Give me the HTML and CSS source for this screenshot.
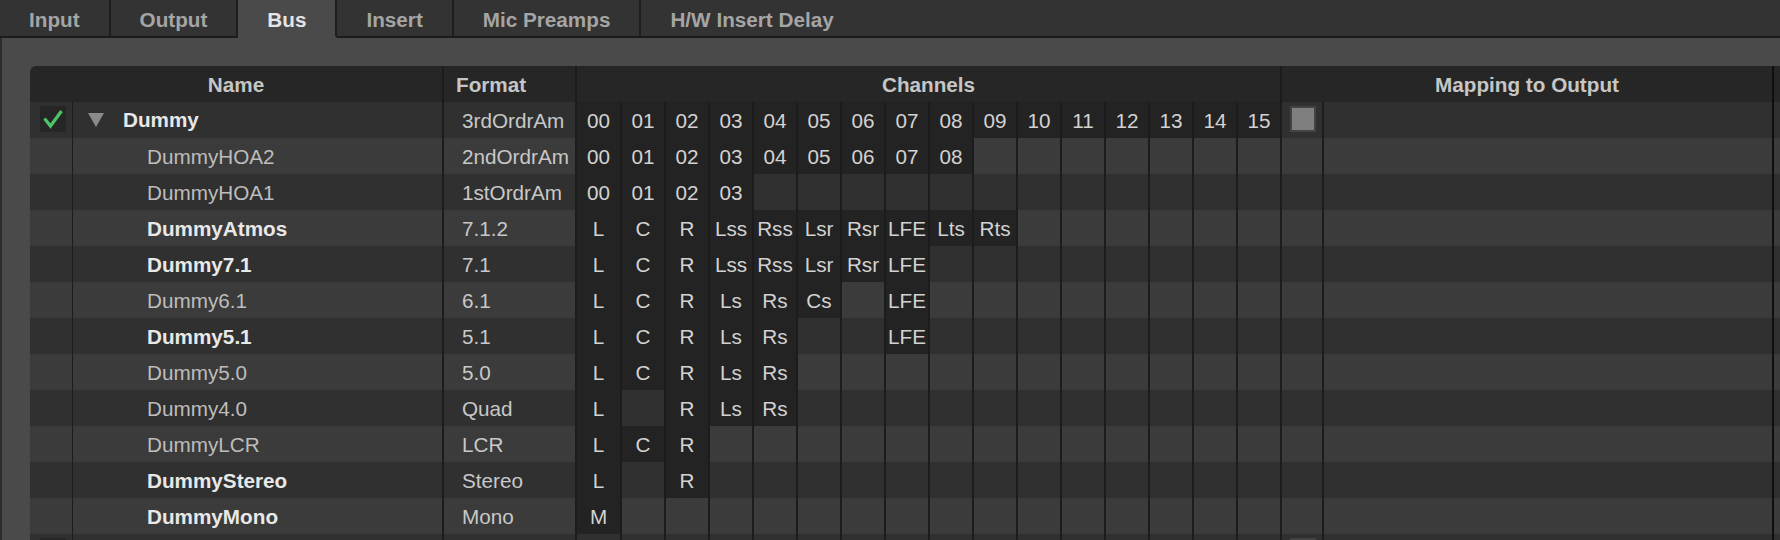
FILE: index.html
```html
<!DOCTYPE html>
<html>
<head>
<meta charset="utf-8">
<link rel="stylesheet" href="styles.css">
</head>
<body>
<div class="tabs">
  <div class="tab">Input</div>
  <div class="tab">Output</div>
  <div class="tab active">Bus</div>
  <div class="tab">Insert</div>
  <div class="tab">Mic Preamps</div>
  <div class="tab last">H/W Insert Delay</div>
  <div class="tabs-fill"></div>
</div>
<div class="panel">
  <div class="table">
    <div class="row head">
      <div class="h-name">Name</div>
      <div class="h-format">Format</div>
      <div class="h-channels">Channels</div>
      <div class="h-map">Mapping to Output</div>
      <div class="extra"></div>
    </div>

    <div class="row dark">
      <div class="c-check"><div class="chk"><svg width="26" height="26" viewBox="0 0 26 26"><path d="M4.5 12.5 L10.5 20 L21.5 5" fill="none" stroke="#4cc466" stroke-width="3.2" stroke-linejoin="miter"/></svg></div></div>
      <div class="c-name group"><svg class="tri" width="16" height="14" viewBox="0 0 16 14"><path d="M0 0 H16 L8 14 Z" fill="#8a8a8a"/></svg><span class="b">Dummy</span></div>
      <div class="c-format">3rdOrdrAm</div>
      <div class="ch first on">00</div><div class="ch on">01</div><div class="ch on">02</div><div class="ch on">03</div><div class="ch on">04</div><div class="ch on">05</div><div class="ch on">06</div><div class="ch on">07</div><div class="ch on">08</div><div class="ch on">09</div><div class="ch on">10</div><div class="ch on">11</div><div class="ch on">12</div><div class="ch on">13</div><div class="ch on">14</div><div class="ch on">15</div>
      <div class="c-mapchk"><div class="mbox"></div></div>
      <div class="c-map"></div>
      <div class="extra"></div>
    </div>

    <div class="row light">
      <div class="c-check"></div>
      <div class="c-name"><span class="r">DummyHOA2</span></div>
      <div class="c-format">2ndOrdrAm</div>
      <div class="ch first on">00</div><div class="ch on">01</div><div class="ch on">02</div><div class="ch on">03</div><div class="ch on">04</div><div class="ch on">05</div><div class="ch on">06</div><div class="ch on">07</div><div class="ch on">08</div><div class="ch"></div><div class="ch"></div><div class="ch"></div><div class="ch"></div><div class="ch"></div><div class="ch"></div><div class="ch"></div>
      <div class="c-mapchk"></div>
      <div class="c-map"></div>
      <div class="extra"></div>
    </div>

    <div class="row dark">
      <div class="c-check"></div>
      <div class="c-name"><span class="r">DummyHOA1</span></div>
      <div class="c-format">1stOrdrAm</div>
      <div class="ch first on">00</div><div class="ch on">01</div><div class="ch on">02</div><div class="ch on">03</div><div class="ch"></div><div class="ch"></div><div class="ch"></div><div class="ch"></div><div class="ch"></div><div class="ch"></div><div class="ch"></div><div class="ch"></div><div class="ch"></div><div class="ch"></div><div class="ch"></div><div class="ch"></div>
      <div class="c-mapchk"></div>
      <div class="c-map"></div>
      <div class="extra"></div>
    </div>

    <div class="row light">
      <div class="c-check"></div>
      <div class="c-name"><span class="b">DummyAtmos</span></div>
      <div class="c-format">7.1.2</div>
      <div class="ch first on">L</div><div class="ch on">C</div><div class="ch on">R</div><div class="ch on">Lss</div><div class="ch on">Rss</div><div class="ch on">Lsr</div><div class="ch on">Rsr</div><div class="ch on">LFE</div><div class="ch on">Lts</div><div class="ch on">Rts</div><div class="ch"></div><div class="ch"></div><div class="ch"></div><div class="ch"></div><div class="ch"></div><div class="ch"></div>
      <div class="c-mapchk"></div>
      <div class="c-map"></div>
      <div class="extra"></div>
    </div>

    <div class="row dark">
      <div class="c-check"></div>
      <div class="c-name"><span class="b">Dummy7.1</span></div>
      <div class="c-format">7.1</div>
      <div class="ch first on">L</div><div class="ch on">C</div><div class="ch on">R</div><div class="ch on">Lss</div><div class="ch on">Rss</div><div class="ch on">Lsr</div><div class="ch on">Rsr</div><div class="ch on">LFE</div><div class="ch"></div><div class="ch"></div><div class="ch"></div><div class="ch"></div><div class="ch"></div><div class="ch"></div><div class="ch"></div><div class="ch"></div>
      <div class="c-mapchk"></div>
      <div class="c-map"></div>
      <div class="extra"></div>
    </div>

    <div class="row light">
      <div class="c-check"></div>
      <div class="c-name"><span class="r">Dummy6.1</span></div>
      <div class="c-format">6.1</div>
      <div class="ch first on">L</div><div class="ch on">C</div><div class="ch on">R</div><div class="ch on">Ls</div><div class="ch on">Rs</div><div class="ch on">Cs</div><div class="ch"></div><div class="ch on">LFE</div><div class="ch"></div><div class="ch"></div><div class="ch"></div><div class="ch"></div><div class="ch"></div><div class="ch"></div><div class="ch"></div><div class="ch"></div>
      <div class="c-mapchk"></div>
      <div class="c-map"></div>
      <div class="extra"></div>
    </div>

    <div class="row dark">
      <div class="c-check"></div>
      <div class="c-name"><span class="b">Dummy5.1</span></div>
      <div class="c-format">5.1</div>
      <div class="ch first on">L</div><div class="ch on">C</div><div class="ch on">R</div><div class="ch on">Ls</div><div class="ch on">Rs</div><div class="ch"></div><div class="ch"></div><div class="ch on">LFE</div><div class="ch"></div><div class="ch"></div><div class="ch"></div><div class="ch"></div><div class="ch"></div><div class="ch"></div><div class="ch"></div><div class="ch"></div>
      <div class="c-mapchk"></div>
      <div class="c-map"></div>
      <div class="extra"></div>
    </div>

    <div class="row light">
      <div class="c-check"></div>
      <div class="c-name"><span class="r">Dummy5.0</span></div>
      <div class="c-format">5.0</div>
      <div class="ch first on">L</div><div class="ch on">C</div><div class="ch on">R</div><div class="ch on">Ls</div><div class="ch on">Rs</div><div class="ch"></div><div class="ch"></div><div class="ch"></div><div class="ch"></div><div class="ch"></div><div class="ch"></div><div class="ch"></div><div class="ch"></div><div class="ch"></div><div class="ch"></div><div class="ch"></div>
      <div class="c-mapchk"></div>
      <div class="c-map"></div>
      <div class="extra"></div>
    </div>

    <div class="row dark">
      <div class="c-check"></div>
      <div class="c-name"><span class="r">Dummy4.0</span></div>
      <div class="c-format">Quad</div>
      <div class="ch first on">L</div><div class="ch"></div><div class="ch on">R</div><div class="ch on">Ls</div><div class="ch on">Rs</div><div class="ch"></div><div class="ch"></div><div class="ch"></div><div class="ch"></div><div class="ch"></div><div class="ch"></div><div class="ch"></div><div class="ch"></div><div class="ch"></div><div class="ch"></div><div class="ch"></div>
      <div class="c-mapchk"></div>
      <div class="c-map"></div>
      <div class="extra"></div>
    </div>

    <div class="row light">
      <div class="c-check"></div>
      <div class="c-name"><span class="r">DummyLCR</span></div>
      <div class="c-format">LCR</div>
      <div class="ch first on">L</div><div class="ch on">C</div><div class="ch on">R</div><div class="ch"></div><div class="ch"></div><div class="ch"></div><div class="ch"></div><div class="ch"></div><div class="ch"></div><div class="ch"></div><div class="ch"></div><div class="ch"></div><div class="ch"></div><div class="ch"></div><div class="ch"></div><div class="ch"></div>
      <div class="c-mapchk"></div>
      <div class="c-map"></div>
      <div class="extra"></div>
    </div>

    <div class="row dark">
      <div class="c-check"></div>
      <div class="c-name"><span class="b">DummyStereo</span></div>
      <div class="c-format">Stereo</div>
      <div class="ch first on">L</div><div class="ch"></div><div class="ch on">R</div><div class="ch"></div><div class="ch"></div><div class="ch"></div><div class="ch"></div><div class="ch"></div><div class="ch"></div><div class="ch"></div><div class="ch"></div><div class="ch"></div><div class="ch"></div><div class="ch"></div><div class="ch"></div><div class="ch"></div>
      <div class="c-mapchk"></div>
      <div class="c-map"></div>
      <div class="extra"></div>
    </div>

    <div class="row light">
      <div class="c-check"></div>
      <div class="c-name"><span class="b">DummyMono</span></div>
      <div class="c-format">Mono</div>
      <div class="ch first on">M</div><div class="ch"></div><div class="ch"></div><div class="ch"></div><div class="ch"></div><div class="ch"></div><div class="ch"></div><div class="ch"></div><div class="ch"></div><div class="ch"></div><div class="ch"></div><div class="ch"></div><div class="ch"></div><div class="ch"></div><div class="ch"></div><div class="ch"></div>
      <div class="c-mapchk"></div>
      <div class="c-map"></div>
      <div class="extra"></div>
    </div>

    <div class="row dark">
      <div class="c-check"><div class="chk"></div></div>
      <div class="c-name"></div>
      <div class="c-format"></div>
      <div class="ch first"></div><div class="ch"></div><div class="ch"></div><div class="ch"></div><div class="ch"></div><div class="ch"></div><div class="ch"></div><div class="ch"></div><div class="ch"></div><div class="ch"></div><div class="ch"></div><div class="ch"></div><div class="ch"></div><div class="ch"></div><div class="ch"></div><div class="ch"></div>
      <div class="c-mapchk"><div class="mbox"></div></div>
      <div class="c-map"></div>
      <div class="extra"></div>
    </div>
  </div>
</div>
</body>
</html>
```

FILE: styles.css
```css
* {
  box-sizing: border-box;
}

html, body {
  margin: 0;
  padding: 0;
  background: #4a4a4a;
  width: 1780px;
  height: 540px;
  overflow: hidden;
}

body {
  font-family: "Liberation Sans", Arial, sans-serif;
  font-size: 20.7px;
}

/* ---------- tabs ---------- */
.tabs {
  display: flex;
  height: 38px;
  background: #333333;
}

.tab {
  height: 38px;
  padding: 4px 29px 0;
  line-height: 32px;
  font-weight: bold;
  color: #a5a5a5;
  white-space: nowrap;
  border-right: 2px solid #1e1e1e;
  border-bottom: 2px solid #1b1b1b;
}

.tab.last {
  border-right: none;
}

.tab.active {
  background: #4a4a4a;
  color: #e4e4e4;
  border-bottom-color: #4a4a4a;
}

.tabs-fill {
  flex: 1;
  border-bottom: 2px solid #1b1b1b;
}

/* ---------- panel ---------- */
.panel {
  height: 502px;
  padding: 28px 0 0 28px;
  border-left: 2px solid #2c2c2c;
  overflow: hidden;
}

.table {
  width: max-content;
  border-top-left-radius: 6px;
  overflow: hidden;
}

.row {
  display: flex;
  height: 36px;
  line-height: 38px;
  white-space: nowrap;
}

.row > div {
  flex-shrink: 0;
  height: 36px;
  overflow: hidden;
}

.row.dark { background: #303030; }
.row.light { background: #3b3b3b; }

/* ---------- header ---------- */
.head {
  background: #262626;
  font-weight: bold;
  color: #c6c6c6;
}

.h-name {
  width: 412px;
  text-align: center;
}

.h-format {
  width: 133px;
  padding-left: 12px;
  border-left: 2px solid #1c1c1c;
}

.h-channels {
  width: 705px;
  text-align: center;
  border-left: 2px solid #1c1c1c;
}

.h-map {
  width: 492px;
  text-align: center;
  border-left: 2px solid #1c1c1c;
}

.extra {
  width: 40px;
  border-left: 2px solid #0f0f0f;
}

/* ---------- body cells ---------- */
.c-check {
  width: 42px;
  padding: 4px 0 0 10px;
}

.chk {
  width: 26px;
  height: 26px;
  background: #262626;
}

.chk svg {
  display: block;
}

.c-name {
  width: 370px;
  padding-left: 74px;
  border-left: 1px solid #1c1c1c;
}

.c-name.group {
  display: flex;
  align-items: center;
  padding-left: 15px;
}

.tri {
  display: block;
  margin-right: 19px;
}

.b {
  font-weight: bold;
  color: #e8e8e8;
}

.r {
  color: #bdbdbd;
}

.c-format {
  width: 133px;
  padding-left: 18px;
  color: #c8c8c8;
  border-left: 2px solid #1c1c1c;
}

.ch {
  width: 44px;
  text-align: center;
  color: #d2d2d2;
  border-left: 2px solid #1c1c1c;
}

.ch.first {
  width: 45px;
}

.ch.on {
  background: #232323;
}

.c-mapchk {
  width: 42px;
  padding: 4px 0 0 8px;
  border-left: 2px solid #1c1c1c;
}

.mbox {
  width: 26px;
  height: 26px;
  background: #7f7f7f;
  border: 2px solid #434343;
}

.c-map {
  width: 450px;
  border-left: 2px solid #1c1c1c;
}
```
